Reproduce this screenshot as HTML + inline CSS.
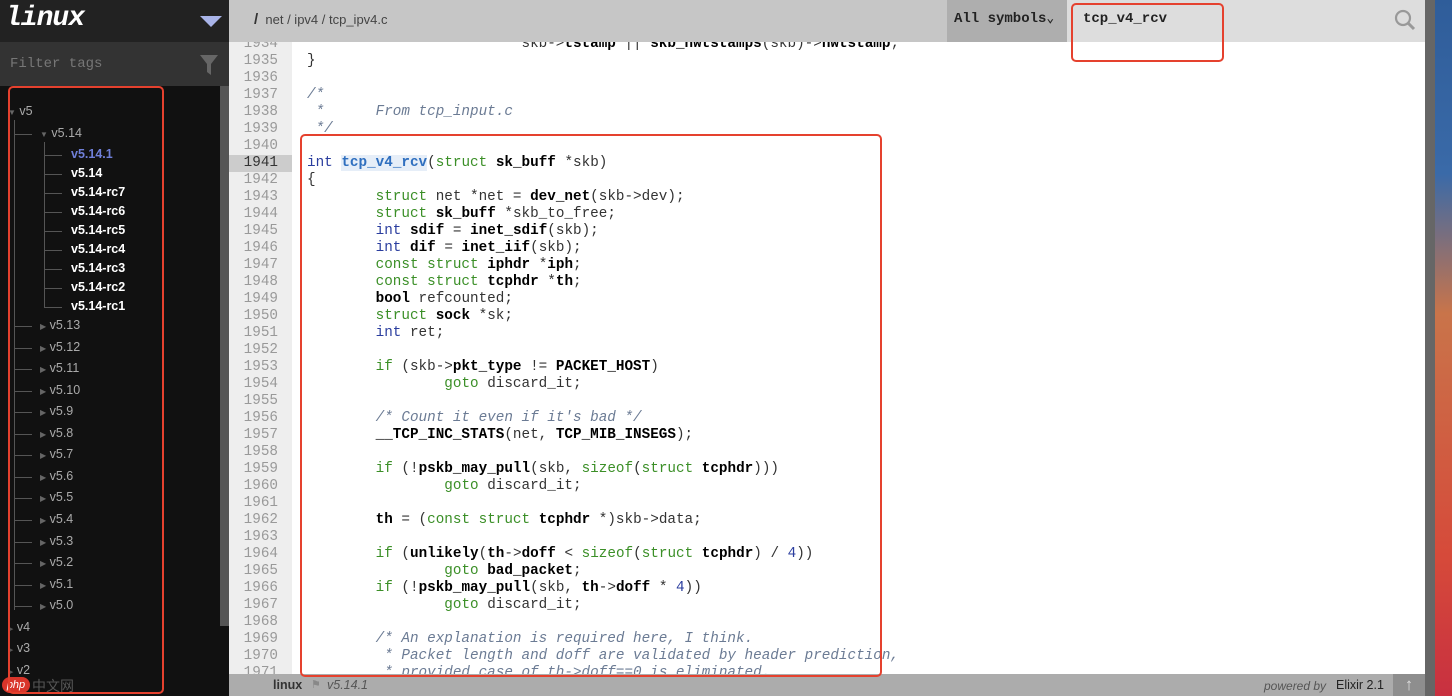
<!DOCTYPE html>
<html><head><meta charset="utf-8"><style>
*{margin:0;padding:0;box-sizing:border-box}
body{width:1452px;height:696px;overflow:hidden;position:relative;background:#fff;font-family:"Liberation Sans",sans-serif}
#side{position:absolute;left:0;top:0;width:229px;height:696px;background:#111}
#logo{position:absolute;left:0;top:0;width:229px;height:42px;background:#222}
#logo span{position:absolute;left:5px;top:3px;font:italic bold 28px "Liberation Mono",monospace;color:#fff;letter-spacing:-1px}
#tri{position:absolute;left:200px;top:16px;width:0;height:0;border-left:11px solid transparent;border-right:11px solid transparent;border-top:11px solid #a9b4e8}
#filter{position:absolute;left:0;top:42px;width:229px;height:44px;background:#333}
#filter span{position:absolute;left:10px;top:14px;font:14px "Liberation Mono",monospace;color:#777}
#sb{position:absolute;left:220px;top:86px;width:9px;height:540px;background:#555}
.tr{position:absolute;font-size:12.5px;color:#aaa;white-space:nowrap}
.tr span{color:#666}
.tr.w{color:#fff;font-weight:bold}
.tr.a{color:#6f7fd8;font-weight:bold}
.ln{position:absolute;background:#555}
#hdr{position:absolute;left:229px;top:0;width:1196px;height:42px;background:#c6c6c6}
#crumb{position:absolute;left:254px;top:11px;font-size:13px;color:#444}
#sel{position:absolute;left:947px;top:0;width:120px;height:42px;background:#aeaeae;font:bold 14px "Liberation Mono",monospace;color:#222;padding:11px 0 0 7px}
#srch{position:absolute;left:1067px;top:0;width:358px;height:42px;background:#ddd;font:bold 14px "Liberation Mono",monospace;color:#222;padding:11px 0 0 16px}
#nums{position:absolute;left:229px;top:42px;width:63px;height:632px;background:#eee;overflow:hidden}
#code{position:absolute;left:292px;top:42px;width:1133px;height:632px;overflow:hidden}
.n,.l{position:absolute;height:17px;line-height:17px;font:14.3px/17px "Liberation Mono",monospace;white-space:pre;margin-top:1px}
.n{left:0;width:63px;text-align:right;padding-right:14px;color:#999}
.n.h{background:#ccc;color:#333}
.l{left:15px;color:#333}
.k{color:#3b8f27}.b{font-weight:bold;color:#000}.c{color:#6b7b94;font-style:italic}.f{color:#2f6fbf;font-weight:bold;background:#e6eef8}.u{color:#2a3d9e}
#foot{position:absolute;left:229px;top:674px;width:1196px;height:22px;background:#acacac}
#foot .a{position:absolute;left:44px;top:4px;font-size:12.5px;font-weight:bold;color:#333}
#foot .v{position:absolute;left:98px;top:4px;font-size:12.5px;font-style:italic;color:#555}
#foot .p{position:absolute;left:1035px;top:5px;font-size:12px;font-style:italic;color:#555}
#foot .e{position:absolute;left:1107px;top:4px;font-size:12.5px;color:#222}
#up{position:absolute;left:1393px;top:674px;width:32px;height:22px;background:#8e8e8e;color:#ddd;text-align:center;font-size:17px;line-height:22px}
#rs{position:absolute;left:1425px;top:0;width:10px;height:696px;background:#666}
#desk{position:absolute;left:1435px;top:0;width:17px;height:696px;background:linear-gradient(#2f5d9a 0%,#3a6aa8 25%,#c9744a 45%,#d64a3a 80%,#c83040 100%)}
.red{position:absolute;border:2.5px solid #e5412e;border-radius:5px}
</style></head><body>
<div id="side">
<div id="logo"><span>linux</span><div id="tri"></div></div>
<div id="filter"><span>Filter tags</span>
<svg style="position:absolute;left:200px;top:13px" width="18" height="20"><path d="M0 0H18L11 9V20L7 17V9Z" fill="#666"/></svg></div>
<div id="sb"></div>
<div class="ln" style="left:14px;top:120px;width:1px;height:490px"></div>
<div class="ln" style="left:44px;top:142px;width:1px;height:165px"></div>
<div class="tr" style="left:8px;top:104px"><span style="font-size:8px">▼</span> v5</div>
<div class="ln" style="left:14px;top:134px;width:18px;height:1px"></div><div class="tr" style="left:40px;top:126px"><span style="font-size:8px">▼</span> v5.14</div>
<div class="ln" style="left:44px;top:155px;width:18px;height:1px"></div><div class="tr a" style="left:71px;top:147px">v5.14.1</div>
<div class="ln" style="left:44px;top:174px;width:18px;height:1px"></div><div class="tr w" style="left:71px;top:166px">v5.14</div>
<div class="ln" style="left:44px;top:193px;width:18px;height:1px"></div><div class="tr w" style="left:71px;top:185px">v5.14-rc7</div>
<div class="ln" style="left:44px;top:212px;width:18px;height:1px"></div><div class="tr w" style="left:71px;top:204px">v5.14-rc6</div>
<div class="ln" style="left:44px;top:231px;width:18px;height:1px"></div><div class="tr w" style="left:71px;top:223px">v5.14-rc5</div>
<div class="ln" style="left:44px;top:250px;width:18px;height:1px"></div><div class="tr w" style="left:71px;top:242px">v5.14-rc4</div>
<div class="ln" style="left:44px;top:269px;width:18px;height:1px"></div><div class="tr w" style="left:71px;top:261px">v5.14-rc3</div>
<div class="ln" style="left:44px;top:288px;width:18px;height:1px"></div><div class="tr w" style="left:71px;top:280px">v5.14-rc2</div>
<div class="ln" style="left:44px;top:307px;width:18px;height:1px"></div><div class="tr w" style="left:71px;top:299px">v5.14-rc1</div>
<div class="ln" style="left:14px;top:326px;width:18px;height:1px"></div><div class="tr" style="left:40px;top:318px"><span style="font-size:8px">▶</span> v5.13</div>
<div class="ln" style="left:14px;top:348px;width:18px;height:1px"></div><div class="tr" style="left:40px;top:340px"><span style="font-size:8px">▶</span> v5.12</div>
<div class="ln" style="left:14px;top:369px;width:18px;height:1px"></div><div class="tr" style="left:40px;top:361px"><span style="font-size:8px">▶</span> v5.11</div>
<div class="ln" style="left:14px;top:391px;width:18px;height:1px"></div><div class="tr" style="left:40px;top:383px"><span style="font-size:8px">▶</span> v5.10</div>
<div class="ln" style="left:14px;top:412px;width:18px;height:1px"></div><div class="tr" style="left:40px;top:404px"><span style="font-size:8px">▶</span> v5.9</div>
<div class="ln" style="left:14px;top:434px;width:18px;height:1px"></div><div class="tr" style="left:40px;top:426px"><span style="font-size:8px">▶</span> v5.8</div>
<div class="ln" style="left:14px;top:455px;width:18px;height:1px"></div><div class="tr" style="left:40px;top:447px"><span style="font-size:8px">▶</span> v5.7</div>
<div class="ln" style="left:14px;top:477px;width:18px;height:1px"></div><div class="tr" style="left:40px;top:469px"><span style="font-size:8px">▶</span> v5.6</div>
<div class="ln" style="left:14px;top:498px;width:18px;height:1px"></div><div class="tr" style="left:40px;top:490px"><span style="font-size:8px">▶</span> v5.5</div>
<div class="ln" style="left:14px;top:520px;width:18px;height:1px"></div><div class="tr" style="left:40px;top:512px"><span style="font-size:8px">▶</span> v5.4</div>
<div class="ln" style="left:14px;top:542px;width:18px;height:1px"></div><div class="tr" style="left:40px;top:534px"><span style="font-size:8px">▶</span> v5.3</div>
<div class="ln" style="left:14px;top:563px;width:18px;height:1px"></div><div class="tr" style="left:40px;top:555px"><span style="font-size:8px">▶</span> v5.2</div>
<div class="ln" style="left:14px;top:585px;width:18px;height:1px"></div><div class="tr" style="left:40px;top:577px"><span style="font-size:8px">▶</span> v5.1</div>
<div class="ln" style="left:14px;top:606px;width:18px;height:1px"></div><div class="tr" style="left:40px;top:598px"><span style="font-size:8px">▶</span> v5.0</div>
<div class="tr" style="left:8px;top:620px"><span style="font-size:7px;color:#555">▶</span> v4</div>
<div class="tr" style="left:8px;top:641px"><span style="font-size:7px;color:#555">▶</span> v3</div>
<div class="tr" style="left:8px;top:663px"><span style="font-size:7px;color:#555">▶</span> v2</div>
<div style="position:absolute;left:2px;top:677px;width:28px;height:16px;border-radius:8px;background:#d9352a;color:#fff;font-size:11px;font-style:italic;text-align:center;line-height:16px">php</div>
<div style="position:absolute;left:32px;top:676px;font-size:14px;color:#555;font-family:'Noto Sans CJK SC',sans-serif">中文网</div>
</div>
<div id="hdr"></div>
<div id="crumb"><b style="font-size:15px;color:#333">/</b>&nbsp; net / ipv4 / tcp_ipv4.c</div>
<div id="sel">All symbols<span style="font-size:13px">&#8964;</span></div>
<div id="srch">tcp_v4_rcv</div>
<svg style="position:absolute;left:1394px;top:9px" width="22" height="22"><circle cx="9" cy="9" r="7" fill="none" stroke="#999" stroke-width="2.2"/><path d="M14 14L20 20" stroke="#999" stroke-width="3"/></svg>
<div id="nums">
<div class="n" style="top:-7px">1934</div><div class="n" style="top:10px">1935</div><div class="n" style="top:27px">1936</div><div class="n" style="top:44px">1937</div><div class="n" style="top:61px">1938</div><div class="n" style="top:78px">1939</div><div class="n" style="top:95px">1940</div><div class="n h" style="top:112px">1941</div><div class="n" style="top:129px">1942</div><div class="n" style="top:146px">1943</div><div class="n" style="top:163px">1944</div><div class="n" style="top:180px">1945</div><div class="n" style="top:197px">1946</div><div class="n" style="top:214px">1947</div><div class="n" style="top:231px">1948</div><div class="n" style="top:248px">1949</div><div class="n" style="top:265px">1950</div><div class="n" style="top:282px">1951</div><div class="n" style="top:299px">1952</div><div class="n" style="top:316px">1953</div><div class="n" style="top:333px">1954</div><div class="n" style="top:350px">1955</div><div class="n" style="top:367px">1956</div><div class="n" style="top:384px">1957</div><div class="n" style="top:401px">1958</div><div class="n" style="top:418px">1959</div><div class="n" style="top:435px">1960</div><div class="n" style="top:452px">1961</div><div class="n" style="top:469px">1962</div><div class="n" style="top:486px">1963</div><div class="n" style="top:503px">1964</div><div class="n" style="top:520px">1965</div><div class="n" style="top:537px">1966</div><div class="n" style="top:554px">1967</div><div class="n" style="top:571px">1968</div><div class="n" style="top:588px">1969</div><div class="n" style="top:605px">1970</div><div class="n" style="top:622px">1971</div>
</div>
<div id="code">
<div class="l" style="top:-7px">                         skb-&gt;<span class="b">tstamp</span> || <span class="b">skb_hwtstamps</span>(skb)-&gt;<span class="b">hwtstamp</span>;</div>
<div class="l" style="top:10px">}</div>
<div class="l" style="top:44px"><span class="c">/*</span></div>
<div class="l" style="top:61px"><span class="c"> *      From tcp_input.c</span></div>
<div class="l" style="top:78px"><span class="c"> */</span></div>
<div class="l" style="top:112px"><span class="u">int</span> <span class="f">tcp_v4_rcv</span>(<span class="k">struct</span> <span class="b">sk_buff</span> *skb)</div>
<div class="l" style="top:129px">{</div>
<div class="l" style="top:146px">        <span class="k">struct</span> net *net = <span class="b">dev_net</span>(skb-&gt;dev);</div>
<div class="l" style="top:163px">        <span class="k">struct</span> <span class="b">sk_buff</span> *skb_to_free;</div>
<div class="l" style="top:180px">        <span class="u">int</span> <span class="b">sdif</span> = <span class="b">inet_sdif</span>(skb);</div>
<div class="l" style="top:197px">        <span class="u">int</span> <span class="b">dif</span> = <span class="b">inet_iif</span>(skb);</div>
<div class="l" style="top:214px">        <span class="k">const struct</span> <span class="b">iphdr</span> *<span class="b">iph</span>;</div>
<div class="l" style="top:231px">        <span class="k">const struct</span> <span class="b">tcphdr</span> *<span class="b">th</span>;</div>
<div class="l" style="top:248px">        <span class="b">bool</span> refcounted;</div>
<div class="l" style="top:265px">        <span class="k">struct</span> <span class="b">sock</span> *sk;</div>
<div class="l" style="top:282px">        <span class="u">int</span> ret;</div>
<div class="l" style="top:316px">        <span class="k">if</span> (skb-&gt;<span class="b">pkt_type</span> != <span class="b">PACKET_HOST</span>)</div>
<div class="l" style="top:333px">                <span class="k">goto</span> discard_it;</div>
<div class="l" style="top:367px">        <span class="c">/* Count it even if it's bad */</span></div>
<div class="l" style="top:384px">        <span class="b">__TCP_INC_STATS</span>(net, <span class="b">TCP_MIB_INSEGS</span>);</div>
<div class="l" style="top:418px">        <span class="k">if</span> (!<span class="b">pskb_may_pull</span>(skb, <span class="k">sizeof</span>(<span class="k">struct</span> <span class="b">tcphdr</span>)))</div>
<div class="l" style="top:435px">                <span class="k">goto</span> discard_it;</div>
<div class="l" style="top:469px">        <span class="b">th</span> = (<span class="k">const struct</span> <span class="b">tcphdr</span> *)skb-&gt;data;</div>
<div class="l" style="top:503px">        <span class="k">if</span> (<span class="b">unlikely</span>(<span class="b">th</span>-&gt;<span class="b">doff</span> &lt; <span class="k">sizeof</span>(<span class="k">struct</span> <span class="b">tcphdr</span>) / <span class="u">4</span>))</div>
<div class="l" style="top:520px">                <span class="k">goto</span> <span class="b">bad_packet</span>;</div>
<div class="l" style="top:537px">        <span class="k">if</span> (!<span class="b">pskb_may_pull</span>(skb, <span class="b">th</span>-&gt;<span class="b">doff</span> * <span class="u">4</span>))</div>
<div class="l" style="top:554px">                <span class="k">goto</span> discard_it;</div>
<div class="l" style="top:588px">        <span class="c">/* An explanation is required here, I think.</span></div>
<div class="l" style="top:605px"><span class="c">         * Packet length and doff are validated by header prediction,</span></div>
<div class="l" style="top:622px"><span class="c">         * provided case of th-&gt;doff==0 is eliminated.</span></div>
</div>
<div id="foot"><span class="a">linux</span><span style="position:absolute;left:82px;top:4px;color:#888;font-size:11px">&#9873;</span><span class="v">v5.14.1</span><span class="p">powered by</span><span class="e">Elixir 2.1</span></div>
<div id="up">&#8593;</div>
<div id="rs"></div>
<div id="desk"></div>
<div class="red" style="left:8px;top:86px;width:156px;height:608px"></div>
<div class="red" style="left:300px;top:134px;width:582px;height:543px"></div>
<div class="red" style="left:1071px;top:3px;width:153px;height:59px"></div>
</body></html>
